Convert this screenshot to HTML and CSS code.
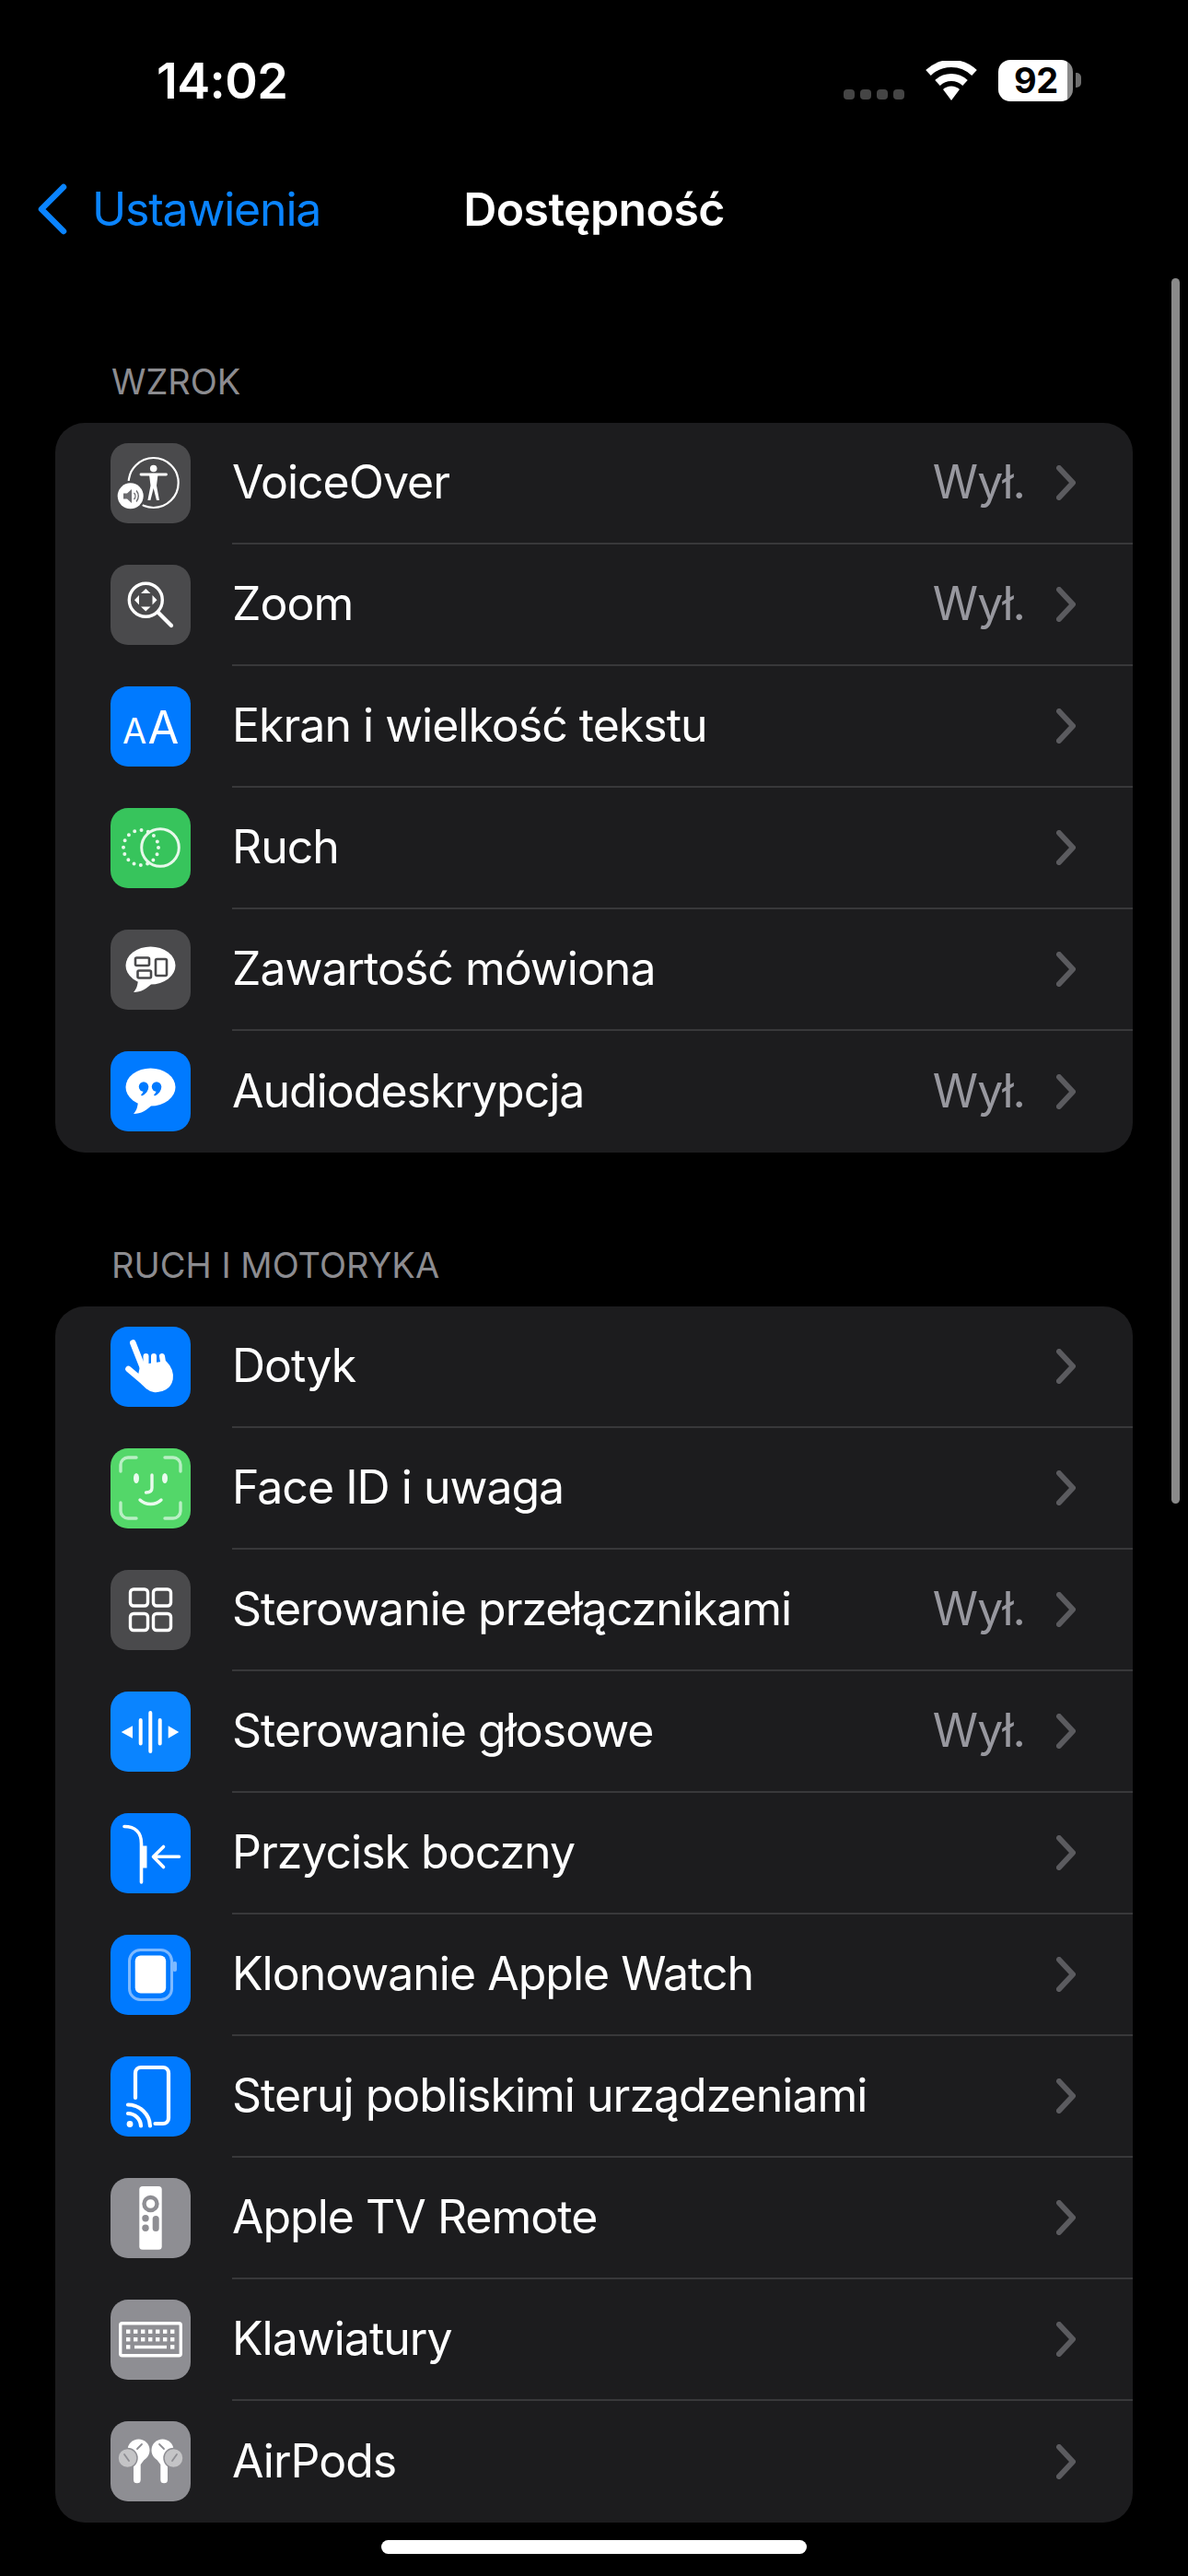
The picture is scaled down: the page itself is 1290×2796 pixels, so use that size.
FILE: index.html
```html
<!DOCTYPE html>
<html lang="pl">
<head>
  <meta charset="UTF-8" />
  <meta name="viewport" content="width=device-width, initial-scale=1.0"/>
  <title>Dostępność</title>
  <link rel="stylesheet" href="styles.css">
</head>
<body>
  <div class="status">
    <span class="time">14:02</span>
    <div class="status-icons">
      <div class="signal"><i></i><i></i><i></i><i></i></div>
      <svg class="wifi" width="58" height="43" viewBox="0 0 58 43">
        <path d="M29 43 L20 31 A13 13 0 0 1 38 31 Z" fill="#fff"/>
        <path d="M14 24 A22 22 0 0 1 44 24" fill="none" stroke="#fff" stroke-width="8"/>
        <path d="M4 13 A36 36 0 0 1 54 13" fill="none" stroke="#fff" stroke-width="8"/>
      </svg>
      <div class="battery"><div class="battery-body"><span>92</span></div><div class="battery-cap"></div></div>
    </div>
  </div>

  <div class="nav">
    <div class="back">
      <svg width="33" height="56" viewBox="0 0 33 56"><path d="M29 4 L5 28 L29 52" fill="none" stroke="#0a84ff" stroke-width="6.5" stroke-linecap="round" stroke-linejoin="round"/></svg>
      <span>Ustawienia</span>
    </div>
    <div class="title">Dostępność</div>
  </div>

  <div class="section first">
    <div class="section-label">WZROK</div>
    <div class="card">
      <div class="row">
        <svg class="icon" viewBox="0 0 87 87">
          <rect class="bg-dark" width="87" height="87" rx="19"/>
          <circle cx="46.7" cy="43" r="27" fill="none" stroke="#fff" stroke-width="2.2"/>
          <circle cx="46.7" cy="27.5" r="3.8" fill="#fff"/>
          <path d="M33 34 H60.5" stroke="#fff" stroke-width="2.8" stroke-linecap="round"/>
          <path d="M42 34 H51.5 L50 46 L53 62 H50 L46.7 49 L43.4 62 H40.4 L43.5 46 Z" fill="#fff"/>
          <circle cx="21.7" cy="57.3" r="16.5" fill="#4a4a4c"/>
          <circle cx="21.7" cy="57.3" r="14" fill="#fff"/>
          <path d="M14 54.5 H18 L23 50 V65 L18 60.5 H14 Z" fill="#6b6b6e"/>
          <path d="M25.5 54 A5 5 0 0 1 25.5 61 M28 51.5 A9 9 0 0 1 28 63.5" fill="none" stroke="#6b6b6e" stroke-width="1.4"/>
        </svg>
        <div class="row-body"><span class="label">VoiceOver</span><span class="value">Wył.</span><svg class="chevron" width="21" height="38" viewBox="0 0 21 38"><path d="M3 3 L18 19 L3 35" /></svg></div>
      </div>
      <div class="row">
        <svg class="icon" viewBox="0 0 87 87">
          <rect class="bg-dark" width="87" height="87" rx="19"/>
          <circle cx="38.3" cy="38.3" r="18" fill="none" stroke="#fff" stroke-width="3.4"/>
          <path d="M52 52 L66 66" stroke="#fff" stroke-width="4.2" stroke-linecap="round"/>
          <path d="M38.3 26 L43.5 31 H33 Z M38.3 50.5 L43.5 45.5 H33 Z M26 38.3 L31 33 V43.5 Z M50.5 38.3 L45.5 33 V43.5 Z" fill="#fff"/>
        </svg>
        <div class="row-body"><span class="label">Zoom</span><span class="value">Wył.</span><svg class="chevron" width="21" height="38" viewBox="0 0 21 38"><path d="M3 3 L18 19 L3 35" /></svg></div>
      </div>
      <div class="row">
        <svg class="icon" viewBox="0 0 87 87">
          <rect class="bg-blue" width="87" height="87" rx="19"/>
          <text x="13" y="62" class="aa-small">A</text>
          <text x="40.5" y="62" class="aa-big">A</text>
        </svg>
        <div class="row-body"><span class="label">Ekran i wielkość tekstu</span><svg class="chevron" width="21" height="38" viewBox="0 0 21 38"><path d="M3 3 L18 19 L3 35" /></svg></div>
      </div>
      <div class="row">
        <svg class="icon" viewBox="0 0 87 87">
          <rect class="bg-green" width="87" height="87" rx="19"/>
          <circle cx="33" cy="43" r="19" fill="none" stroke="#e6f8ea" stroke-width="4" stroke-linecap="round" stroke-dasharray="0 7.46"/>
          <circle cx="54" cy="43" r="20.3" fill="none" stroke="#e6f8ea" stroke-width="3"/>
        </svg>
        <div class="row-body"><span class="label">Ruch</span><svg class="chevron" width="21" height="38" viewBox="0 0 21 38"><path d="M3 3 L18 19 L3 35" /></svg></div>
      </div>
      <div class="row">
        <svg class="icon" viewBox="0 0 87 87">
          <rect class="bg-dark" width="87" height="87" rx="19"/>
          <ellipse cx="43.5" cy="39" rx="27" ry="20.5" fill="#fff"/>
          <path d="M30 52 C30 60 28 65 25 68 C33 68 40 64 45 58 Z" fill="#fff"/>
          <rect x="27" y="30.5" width="15" height="8.5" rx="1.5" fill="none" stroke="#4a4a4c" stroke-width="2.6"/>
          <rect x="29.5" y="44.5" width="14.5" height="8" rx="1.5" fill="none" stroke="#4a4a4c" stroke-width="2.6"/>
          <rect x="49" y="32" width="12" height="18" rx="1.5" fill="none" stroke="#4a4a4c" stroke-width="2.6"/>
        </svg>
        <div class="row-body"><span class="label">Zawartość mówiona</span><svg class="chevron" width="21" height="38" viewBox="0 0 21 38"><path d="M3 3 L18 19 L3 35" /></svg></div>
      </div>
      <div class="row">
        <svg class="icon" viewBox="0 0 87 87">
          <rect class="bg-blue" width="87" height="87" rx="19"/>
          <ellipse cx="43.5" cy="39" rx="27" ry="20.5" fill="#fff"/>
          <path d="M30 52 C30 60 28 65 25 68 C33 68 40 64 45 58 Z" fill="#fff"/>
          <circle cx="36" cy="38.5" r="5.2" fill="#007aff"/>
          <path d="M41.2 38.5 C41.2 43 38 47 34 48.5 L33 47.3 C35 45.5 36 43.5 36 41 Z" fill="#007aff"/>
          <circle cx="50" cy="38.5" r="5.2" fill="#007aff"/>
          <path d="M55.2 38.5 C55.2 43 52 47 48 48.5 L47 47.3 C49 45.5 50 43.5 50 41 Z" fill="#007aff"/>
        </svg>
        <div class="row-body"><span class="label">Audiodeskrypcja</span><span class="value">Wył.</span><svg class="chevron" width="21" height="38" viewBox="0 0 21 38"><path d="M3 3 L18 19 L3 35" /></svg></div>
      </div>
    </div>
  </div>

  <div class="section">
    <div class="section-label">RUCH I MOTORYKA</div>
    <div class="card">
      <div class="row">
        <svg class="icon" viewBox="0 0 87 87">
          <rect class="bg-blue" width="87" height="87" rx="19"/>
          <path d="M24.3 17.5 L36 47 M19.5 46 L36 60" stroke="#fff" stroke-width="6.6" stroke-linecap="round"/>
          <path d="M38.5 32 V44 M47 32 V44 M56 32 L58 44" stroke="#fff" stroke-width="6" stroke-linecap="round"/>
          <path d="M33 42 L60 38 C65 43 68 50 67 57 C65 67 56 71 48 70.5 C41 70 36 65 30 56 Z" fill="#fff" stroke="#fff" stroke-width="1.5" stroke-linejoin="round"/>
        </svg>
        <div class="row-body"><span class="label">Dotyk</span><svg class="chevron" width="21" height="38" viewBox="0 0 21 38"><path d="M3 3 L18 19 L3 35" /></svg></div>
      </div>
      <div class="row">
        <svg class="icon" viewBox="0 0 87 87">
          <rect class="bg-lime" width="87" height="87" rx="19"/>
          <path d="M11 25 V18 A8 8 0 0 1 19 10 H28 M59 10 H68 A8 8 0 0 1 76 18 V25 M76 59 V68 A8 8 0 0 1 68 76 H59 M28 76 H19 A8 8 0 0 1 11 68 V59" fill="none" stroke="#b9efc4" stroke-width="3.4" stroke-linecap="round"/>
          <ellipse cx="28" cy="32.5" rx="3" ry="5.5" fill="#eafaee"/>
          <ellipse cx="59" cy="32.5" rx="3" ry="5.5" fill="#eafaee"/>
          <path d="M45 29 V43 C45 47 42 48 38.5 48 M32 56 C38 62 49 62 55 56" fill="none" stroke="#eafaee" stroke-width="3.4" stroke-linecap="round"/>
        </svg>
        <div class="row-body"><span class="label">Face ID i uwaga</span><svg class="chevron" width="21" height="38" viewBox="0 0 21 38"><path d="M3 3 L18 19 L3 35" /></svg></div>
      </div>
      <div class="row">
        <svg class="icon" viewBox="0 0 87 87">
          <rect class="bg-dark" width="87" height="87" rx="19"/>
          <g fill="none" stroke="#fff" stroke-width="3.4">
            <rect x="21.5" y="21" width="19" height="18" rx="3.5"/>
            <rect x="46.5" y="21" width="19" height="18" rx="3.5"/>
            <rect x="21.5" y="47.5" width="19" height="18" rx="3.5"/>
            <rect x="46.5" y="47.5" width="19" height="18" rx="3.5"/>
          </g>
        </svg>
        <div class="row-body"><span class="label">Sterowanie przełącznikami</span><span class="value">Wył.</span><svg class="chevron" width="21" height="38" viewBox="0 0 21 38"><path d="M3 3 L18 19 L3 35" /></svg></div>
      </div>
      <div class="row">
        <svg class="icon" viewBox="0 0 87 87">
          <rect class="bg-azure" width="87" height="87" rx="19"/>
          <path d="M43.3 23 V65 M32.7 31 V56.5 M53.7 31 V56.5" stroke="#fff" stroke-width="4" stroke-linecap="round"/>
          <path d="M11.7 44 L24 37.3 V50.7 Z M62.7 37.3 L74.3 44 L62.7 50.7 Z" fill="#fff"/>
        </svg>
        <div class="row-body"><span class="label">Sterowanie głosowe</span><span class="value">Wył.</span><svg class="chevron" width="21" height="38" viewBox="0 0 21 38"><path d="M3 3 L18 19 L3 35" /></svg></div>
      </div>
      <div class="row">
        <svg class="icon" viewBox="0 0 87 87">
          <rect class="bg-blue" width="87" height="87" rx="19"/>
          <path d="M15 14.5 C27 14.5 33.5 21 33.5 33 V75" fill="none" stroke="#fff" stroke-width="3.6" stroke-linecap="round"/>
          <rect x="33.5" y="35.5" width="6" height="24" fill="#fff"/>
          <path d="M74.5 47.3 H47 M57.5 36.5 L46.5 47.3 L57.5 58.5" fill="none" stroke="#fff" stroke-width="3.6" stroke-linecap="round" stroke-linejoin="round"/>
        </svg>
        <div class="row-body"><span class="label">Przycisk boczny</span><svg class="chevron" width="21" height="38" viewBox="0 0 21 38"><path d="M3 3 L18 19 L3 35" /></svg></div>
      </div>
      <div class="row">
        <svg class="icon" viewBox="0 0 87 87">
          <rect class="bg-blue" width="87" height="87" rx="19"/>
          <rect x="20.5" y="16.5" width="46" height="54" rx="12" fill="none" stroke="#7db9ff" stroke-width="3"/>
          <rect x="67.5" y="29" width="4.5" height="11" rx="2" fill="#7db9ff"/>
          <rect x="26.7" y="22.5" width="33.5" height="41" rx="6" fill="#fff"/>
        </svg>
        <div class="row-body"><span class="label">Klonowanie Apple Watch</span><svg class="chevron" width="21" height="38" viewBox="0 0 21 38"><path d="M3 3 L18 19 L3 35" /></svg></div>
      </div>
      <div class="row">
        <svg class="icon" viewBox="0 0 87 87">
          <rect class="bg-blue" width="87" height="87" rx="19"/>
          <path d="M27 45 V18 A6 6 0 0 1 33 12 H57 A6 6 0 0 1 63 18 V67 A6 6 0 0 1 57 73 H48.5" fill="none" stroke="#fff" stroke-width="4.2" stroke-linecap="round"/>
          <circle cx="21" cy="73.5" r="3.4" fill="#fff"/>
          <path d="M19 62 A14 14 0 0 1 33 75.5 M19 52.5 A24 24 0 0 1 43 75.5" fill="none" stroke="#fff" stroke-width="4.2" stroke-linecap="round"/>
        </svg>
        <div class="row-body"><span class="label">Steruj pobliskimi urządzeniami</span><svg class="chevron" width="21" height="38" viewBox="0 0 21 38"><path d="M3 3 L18 19 L3 35" /></svg></div>
      </div>
      <div class="row">
        <svg class="icon" viewBox="0 0 87 87">
          <rect class="bg-gray" width="87" height="87" rx="19"/>
          <rect x="31.3" y="9" width="24.4" height="68.7" rx="3.5" fill="#fff"/>
          <circle cx="43.5" cy="28" r="7" fill="none" stroke="#8e8e93" stroke-width="4.4"/>
          <circle cx="38" cy="43.7" r="3.7" fill="#8e8e93"/>
          <circle cx="38" cy="54.3" r="3.7" fill="#8e8e93"/>
          <rect x="45.7" y="41" width="7" height="17" rx="3.5" fill="#8e8e93"/>
        </svg>
        <div class="row-body"><span class="label">Apple TV Remote</span><svg class="chevron" width="21" height="38" viewBox="0 0 21 38"><path d="M3 3 L18 19 L3 35" /></svg></div>
      </div>
      <div class="row">
        <svg class="icon" viewBox="0 0 87 87">
          <rect class="bg-gray" width="87" height="87" rx="19"/>
          <rect x="10.7" y="25.7" width="65.6" height="35" rx="2" fill="none" stroke="#fff" stroke-width="3.4"/>
          <g fill="#fff">
            <rect x="17" y="32.5" width="4.4" height="4.4"/><rect x="25" y="32.5" width="4.4" height="4.4"/><rect x="33" y="32.5" width="4.4" height="4.4"/><rect x="41" y="32.5" width="4.4" height="4.4"/><rect x="49" y="32.5" width="4.4" height="4.4"/><rect x="57" y="32.5" width="4.4" height="4.4"/><rect x="65" y="32.5" width="4.4" height="4.4"/>
            <rect x="17" y="41" width="4.4" height="4.4"/><rect x="25" y="41" width="4.4" height="4.4"/><rect x="33" y="41" width="4.4" height="4.4"/><rect x="41" y="41" width="4.4" height="4.4"/><rect x="49" y="41" width="4.4" height="4.4"/><rect x="57" y="41" width="4.4" height="4.4"/><rect x="65" y="41" width="4.4" height="4.4"/>
            <rect x="17" y="49.2" width="4.4" height="4.4"/><rect x="26" y="49.8" width="35" height="3.4"/><rect x="65" y="49.2" width="4.4" height="4.4"/>
          </g>
        </svg>
        <div class="row-body"><span class="label">Klawiatury</span><svg class="chevron" width="21" height="38" viewBox="0 0 21 38"><path d="M3 3 L18 19 L3 35" /></svg></div>
      </div>
      <div class="row">
        <svg class="icon" viewBox="0 0 87 87">
          <rect class="bg-gray" width="87" height="87" rx="19"/>
          <circle cx="30.5" cy="31.5" r="12" fill="#fff"/>
          <circle cx="56.5" cy="31.5" r="12" fill="#fff"/>
          <path d="M25 36 H41 L32.7 47 V63.5 A3 3 0 0 1 25 63.5 Z" fill="#fff"/>
          <path d="M62 36 H46 L54.3 47 V63.5 A3 3 0 0 0 62 63.5 Z" fill="#fff"/>
          <circle cx="18.5" cy="40" r="10.5" fill="#c4c4c6" stroke="#8e8e93" stroke-width="1.5"/>
          <circle cx="68.5" cy="40" r="10.5" fill="#c4c4c6" stroke="#8e8e93" stroke-width="1.5"/>
          <path d="M15 36 L20 43 M72 36 L67 43 M34 25 L29 30 M53 25 L58 30" stroke="#8e8e93" stroke-width="1.8" stroke-linecap="round"/>
        </svg>
        <div class="row-body"><span class="label">AirPods</span><svg class="chevron" width="21" height="38" viewBox="0 0 21 38"><path d="M3 3 L18 19 L3 35" /></svg></div>
      </div>
    </div>
  </div>

  <div class="scrollbar"></div>
  <div class="home-bar"></div>
</body>
</html>
```

FILE: styles.css
```css
* {
  box-sizing: border-box;
}

html, body {
  margin: 0;
  height: 2796px;
  overflow: hidden;
}

body {
  position: relative;
  background-color: #000;
  color: #fff;
  font-family: Inter, "Noto Sans", sans-serif;
}

.status {
  height: 174px;
  display: flex;
  align-items: center;
  justify-content: space-between;
  padding: 0 116px 0 170px;
}

.time {
  font-size: 54px;
  font-weight: 600;
  letter-spacing: -0.6px;
}

.status-icons {
  display: flex;
  align-items: center;
  gap: 22px;
}

.signal {
  display: flex;
  gap: 6px;
  align-self: flex-end;
  margin-bottom: 2px;
}

.signal i {
  width: 12px;
  height: 11px;
  border-radius: 4px;
  background: #454545;
}

.battery {
  display: flex;
  align-items: center;
  gap: 3px;
}

.battery-body {
  width: 81px;
  height: 45px;
  border-radius: 13px;
  background: linear-gradient(90deg, #fff 93%, #8a8a8a 93%);
  display: flex;
  align-items: center;
  padding-left: 17px;
}

.battery-body span {
  color: #000;
  font-size: 38px;
  font-weight: 700;
  letter-spacing: -0.5px;
}

.battery-cap {
  width: 6px;
  height: 16px;
  border-radius: 0 5px 5px 0;
  background: #6e6e6e;
}

.nav {
  position: relative;
  height: 108px;
  display: flex;
  align-items: center;
  justify-content: center;
  padding-bottom: 2px;
}

.back {
  position: absolute;
  left: 40px;
  top: 23px;
  display: flex;
  align-items: center;
  gap: 27px;
  color: #0a84ff;
  font-size: 50px;
  letter-spacing: -1.2px;
}

.title {
  font-size: 50px;
  font-weight: 600;
  letter-spacing: -0.6px;
}

.section {
  padding: 0 60px;
  margin-top: 99px;
}

.section.first {
  margin-top: 109px;
}

.section-label {
  height: 68px;
  padding: 0 0 22px 61px;
  display: flex;
  align-items: center;
  color: #8c8c90;
  font-size: 38px;
  letter-spacing: 0;
}

.card {
  background: #1c1c1e;
  border-radius: 32px;
  overflow: hidden;
}

.row {
  height: 132px;
  display: flex;
  align-items: center;
  padding-left: 60px;
}

.icon {
  width: 87px;
  height: 87px;
  flex-shrink: 0;
  margin: 0 45px 2px 0;
}

.bg-dark { fill: #4a4a4c; }
.bg-blue { fill: #007aff; }
.bg-azure { fill: #0a84ff; }
.bg-green { fill: #37c45c; }
.bg-lime { fill: #53d769; }
.bg-gray { fill: #8e8e93; }

.aa-small, .aa-big {
  fill: #fff;
  font-family: Inter, sans-serif;
}

.aa-small { font-size: 38px; }
.aa-big { font-size: 49px; }

.row-body {
  flex: 1;
  height: 100%;
  display: flex;
  align-items: center;
  padding-right: 62px;
  border-bottom: 2px solid #38383a;
}

.row:last-child .row-body {
  border-bottom: none;
}

.label {
  flex: 1;
  font-size: 50px;
  letter-spacing: -1px;
  padding-bottom: 3px;
}

.value {
  color: #98989f;
  font-size: 50px;
  letter-spacing: -1px;
  margin-right: 34px;
  padding-bottom: 3px;
}

.chevron path {
  fill: none;
  stroke: #5b5b5f;
  stroke-width: 6px;
  stroke-linecap: round;
  stroke-linejoin: round;
}

.scrollbar {
  position: absolute;
  left: 1272px;
  top: 302px;
  width: 9px;
  height: 1330px;
  border-radius: 5px;
  background: #8a8a8a;
}

.home-bar {
  position: absolute;
  left: 414px;
  top: 2757px;
  width: 462px;
  height: 15px;
  border-radius: 8px;
  background: #fff;
}
```
